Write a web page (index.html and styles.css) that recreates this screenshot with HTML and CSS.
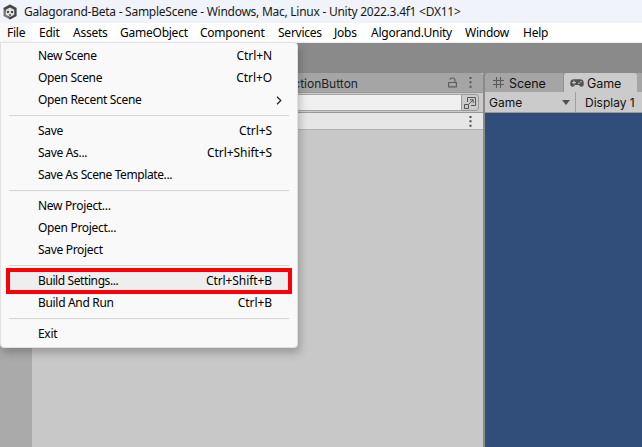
FILE: index.html
```html
<!DOCTYPE html>
<html lang="en">
<head>
<meta charset="utf-8">
<title>Galagorand-Beta</title>
<link rel="stylesheet" href="styles.css">
</head>
<body>
<div class="window">
  <header class="titlebar">
    <svg class="logo" width="14" height="16" viewBox="0 0 14 16"><path d="M7 .5 13.5 4v8L7 15.5.5 12V4z" fill="#77787c"/><path d="M.5 4 7 .5 13.5 4v8L7 15.5z" fill="#292a2e" opacity=".65"/><path d="M2.8 5.8 7 3.4l4.2 2.4v5L7 13l-4.2-2.2z" fill="#dededf"/><path d="M4 7h2v2H4zm4 0h2v2H8zM6.3 10h1.4v2H6.3z" fill="#47484c"/></svg>
    <span class="title">Galagorand-Beta - SampleScene - Windows, Mac, Linux - Unity 2022.3.4f1 &lt;DX11&gt;</span>
  </header>
  <nav class="menubar">
    <span class="m-file open">File</span><span class="m-edit">Edit</span><span class="m-assets">Assets</span><span class="m-object">GameObject</span><span class="m-component">Component</span><span class="m-services">Services</span><span class="m-jobs">Jobs</span><span class="m-algo">Algorand.Unity</span><span class="m-window">Window</span><span class="m-help">Help</span>
  </nav>
  <div class="toolbar"></div>
  <main class="workspace">
    <aside class="rail"></aside>
    <section class="inspector">
      <div class="tabs">
        <span class="object-name">ActionButton</span>
        <svg class="lock" width="9" height="11" viewBox="0 0 9 11"><path d="M.6 5.5h7.8v4.4H.6zM2 2.5Q2 1 4.5 1 7 1 7 3v2.5" fill="none" stroke="#5c5c5c" stroke-width="1.1"/></svg>
        <svg class="dots" width="3" height="11" viewBox="0 0 3 11"><path d="M.5 0h2v2h-2zm0 4.3h2v2h-2zm0 4.4h2v2h-2z" fill="#555"/></svg>
      </div>
      <div class="search">
        <div class="field"></div>
        <div class="picker"><svg width="12" height="12" viewBox="0 0 12 12"><path d="M3.5 5V.5h8v8H7M.5 7.5h4v4h-4zM5 7l4-4M6 2.8h3.2V6" fill="none" stroke="#555"/></svg></div>
      </div>
      <div class="component-row"><svg class="dots" width="3" height="11" viewBox="0 0 3 11"><path d="M.5 0h2v2h-2zm0 4.3h2v2h-2zm0 4.4h2v2h-2z" fill="#484848"/></svg></div>
      <div class="inspector-body"></div>
    </section>
    <section class="game">
      <div class="tabs">
        <div class="tab scene"><svg width="11" height="11" viewBox="0 0 11 11"><path d="M3.5 0v11M7.5 0v11M0 3.5h11M0 7.5h11" stroke="#595959" stroke-width="1.1" fill="none"/></svg><span>Scene</span></div>
        <div class="tab active"><svg width="14" height="8" viewBox="0 0 14 8"><path d="M4 .3h6Q13.8.3 13.8 4.2 13.8 7.7 11.3 7.7 9.8 7.7 9 6H5Q4.2 7.7 2.7 7.7.2 7.7.2 4.2.2.3 4 .3z" fill="#505050"/><path d="M2 3.6h4M4 1.6v4" stroke="#cbcbcb"/><circle cx="9" cy="4.2" r=".8" fill="#cbcbcb"/><circle cx="11" cy="2.8" r=".8" fill="#cbcbcb"/></svg><span>Game</span></div>
      </div>
      <div class="game-options"><div class="mode"><span>Game</span><svg width="8" height="5" viewBox="0 0 8 5"><path d="M0 0h8L4 5z" fill="#505050"/></svg></div><span class="display">Display 1</span></div>
      <div class="viewport"></div>
    </section>
  </main>
</div>
<div class="popup">
  <div class="item"><span>New Scene</span><kbd>Ctrl+N</kbd></div>
  <div class="item"><span>Open Scene</span><kbd>Ctrl+O</kbd></div>
  <div class="item"><span>Open Recent Scene</span><svg class="chevron" width="6" height="9" viewBox="0 0 6 9"><path d="m1 .8 3.8 3.7L1 8.2" fill="none" stroke="#222" stroke-width="1.2"/></svg></div>
  <hr>
  <div class="item"><span>Save</span><kbd>Ctrl+S</kbd></div>
  <div class="item"><span>Save As...</span><kbd>Ctrl+Shift+S</kbd></div>
  <div class="item"><span class="tight">Save As Scene Template...</span></div>
  <hr>
  <div class="item"><span>New Project...</span></div>
  <div class="item"><span>Open Project...</span></div>
  <div class="item"><span>Save Project</span></div>
  <hr>
  <div class="item selected"><span class="tight">Build Settings...</span><kbd>Ctrl+Shift+B</kbd></div>
  <div class="item"><span>Build And Run</span><kbd>Ctrl+B</kbd></div>
  <hr>
  <div class="item"><span>Exit</span></div>
</div>
</body>
</html>
```
FILE: styles.css
```css
* { box-sizing: border-box; }
body { margin: 0; overflow: hidden; font: 12px/16px "Noto Sans", "Open Sans", sans-serif; color: #000; }
svg { display: block; flex: none; }
.window { height: 447px; display: flex; flex-direction: column; }
.titlebar { height: 23px; flex: none; display: flex; align-items: center; padding: 0 0 0 3px; background: #f0f3fa; }
.title { margin-left: 7px; white-space: nowrap; letter-spacing: -.26px; color: #181818; }
.menubar { height: 20px; flex: none; display: flex; background: #fff; border-bottom: 1px solid #eee; white-space: nowrap; }
.menubar span { padding: 2px 7px 0; flex: none; letter-spacing: -.24px; }
.menubar .open { background: #f9f9f9; }
.m-file { width: 32px; }
.m-edit { width: 34px; }
.m-assets { width: 47px; }
.m-object { width: 80px; }
.m-component { width: 78px; }
.m-services { width: 56px; }
.m-jobs { width: 37px; }
.m-algo { width: 94px; }
.m-window { width: 58px; }
.m-help { width: 40px; }
.toolbar { height: 30px; flex: none; background: #8a8a8a; }
.workspace { flex: 1; display: flex; background: #8a8a8a; font-family: Inter, sans-serif; }
.rail { width: 32px; background: #aaa; }
.inspector { width: 451px; display: flex; flex-direction: column; background: #c8c8c8; }
.tabs { height: 19px; flex: none; display: flex; align-items: center; background: #a5a5a5; }
.object-name { width: 92px; margin-left: 253px; padding-top: 2px; color: #222; }
.lock { margin-left: 71px; }
.inspector .tabs .dots { margin-left: 12px; }
.inspector .tabs { border-radius: 0 3px 0 0; }
.search { height: 21px; flex: none; display: flex; padding: 1px 4px 1px 0; border-top: 1px solid #999; border-bottom: 1px solid #999; background: #cbcbcb; }
.field { flex: 1; background: #f0f0f0; border: 1px solid #a5a5a5; border-right: 0; }
.picker { width: 18px; display: flex; align-items: center; justify-content: center; border: 1px solid #999; border-radius: 0 3px 3px 0; }
.component-row { height: 17px; flex: none; display: flex; align-items: center; justify-content: flex-end; padding-right: 11px; background: #e6e6e6; border-bottom: 1px solid #b0b0b0; }
.inspector-body { flex: 1; }
.game { width: 157px; margin-left: 2px; display: flex; flex-direction: column; }
.game .tabs { border-radius: 3px 0 0 0; }
.tab { height: 19px; display: flex; align-items: center; font-size: 12.5px; color: #111; }
.tab span { padding-top: 2px; letter-spacing: -.1px; }
.scene { width: 79px; padding-left: 8px; gap: 5px; border-right: 1px solid #929292; }
.active { width: 73px; padding-left: 6px; gap: 3px; background: #cbcbcb; border-radius: 3px 3px 0 0; }
.game-options { height: 21px; flex: none; display: flex; align-items: center; background: #cbcbcb; border-bottom: 1px solid #999; white-space: nowrap; color: #111; }
.mode { width: 91px; height: 20px; padding: 1px 5px 0 4px; display: flex; align-items: center; justify-content: space-between; border-right: 1px solid #a0a0a0; }
.display { padding: 1px 0 0 9px; }
.viewport { flex: 1; background: #314d79; }
.popup { position: absolute; left: 0; top: 42px; width: 298px; height: 306px; padding: 2px 0; background: #f9f9f9; border: 1px solid #e1e1e1; border-radius: 0 4px 4px 4px; box-shadow: 2px 5px 9px rgba(0, 0, 0, .23); }
.item { height: 22px; display: flex; align-items: center; justify-content: space-between; padding: 0 25px 0 37px; letter-spacing: -.32px; white-space: nowrap; }
.item .tight { letter-spacing: -.4px; }
.item kbd { font: inherit; letter-spacing: -.08px; }
.chevron { margin-right: -10px; }
.popup hr { margin: 4px 8px; border: 0; height: 1px; background: #d5d5d5; }
.selected { height: 26px; margin: -2px 5px; padding: 0 16px 0 28px; background: #eee; border: 4px solid #fb0007; }
```
